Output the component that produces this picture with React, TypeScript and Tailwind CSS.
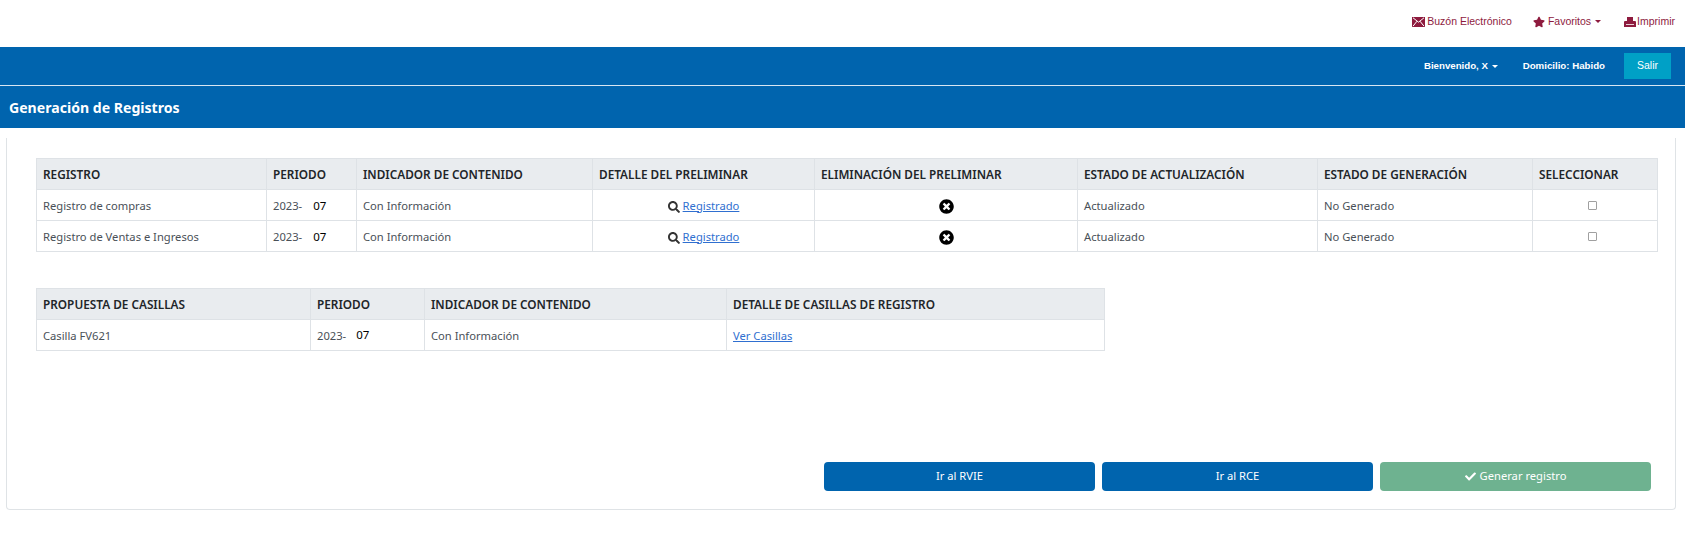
import { FaCheck, FaSearch, FaStar, FaTimesCircle } from "react-icons/fa";

const headerCell = "border border-[#dee2e6] px-1.5 pt-px text-left text-[11.8px] font-semibold text-[#212529]";
const cell = "border border-[#dee2e6] px-1.5 text-[#495057]";
const textCell = `${cell} pt-0.5`;

const registros = ["Registro de compras", "Registro de Ventas e Ingresos"];

function Caret() {
  return <span className="ml-px inline-block border-x-[3px] border-t-[3px] border-x-transparent border-t-current align-middle" />;
}

function MailIcon() {
  return (
    <svg viewBox="0 0 13 10" className="h-2.5 w-[13px]" aria-hidden>
      <path d="M0 0h13v10H0z" fill="currentColor" />
      <path d="M1 .8 6.500 5.200 12 .8M1 9.200 5 4.200M12 9.200 8 4.200" fill="none" stroke="#fff" strokeWidth="1" />
    </svg>
  );
}

function PrintIcon() {
  return (
    <svg viewBox="0 0 12 10" className="h-2.5 w-3" aria-hidden>
      <path d="M3 0h6v4H3zM1 4h10a1 1 0 0 1 1 1v5H0V5a1 1 0 0 1 1-1z" fill="currentColor" />
      <path d="M2 7.500h8" fill="none" stroke="#fff" strokeWidth="0.8" />
    </svg>
  );
}

function Periodo({ raised }: { raised?: boolean }) {
  return (
    <span>
      2023-
      <span className={raised ? "relative -top-px ml-[10px] text-[11.5px] text-black" : "ml-[11px] text-[11.5px] text-black"}>07</span>
    </span>
  );
}

export default function App() {
  return (
    <div className="h-[541px] w-[1685px] bg-white font-['Noto_Sans',sans-serif] text-[11.2px]">
      <div className="flex h-[47px] items-center justify-end gap-[21px] pb-1 pr-[10px] font-['Liberation_Sans',sans-serif] text-[10.5px] text-[#8e1b3e]">
        <a className="flex items-center gap-[2px]"><MailIcon />Buzón Electrónico</a>
        <a className="mr-[2px] flex items-center gap-[3px]"><FaStar className="size-3" />Favoritos <Caret /></a>
        <a className="flex items-center gap-[1px]"><PrintIcon />Imprimir</a>
      </div>

      <header className="bg-[#0064ae] text-white">
        <div className="flex h-[39px] items-center justify-end gap-[22px] border-b border-[#d8e6f2] pr-[14px] font-['Liberation_Sans',sans-serif] text-[9.7px] font-bold">
          <span className="mr-[3px] pt-px">Bienvenido, X <Caret /></span>
          <span>Domicilio: Habido</span>
          <button className="ml-[-3px] h-[26px] w-[47px] bg-[#00a0c6] text-[10.5px] font-normal">Salir</button>
        </div>
        <h1 className="flex h-[42px] items-center px-[9px] pt-px text-[14.1px] font-bold">Generación de Registros</h1>
      </header>

      <main className="ml-1.5 mr-[9px] mt-2.5 flex h-[372px] flex-col rounded-b border border-t-0 border-[#dfe3e6] pl-[29px] pr-[18px] pt-5">
        <table className="w-full table-fixed border-collapse">
          <colgroup>
            <col className="w-[230px]" />
            <col className="w-[90px]" />
            <col className="w-[236px]" />
            <col className="w-[222px]" />
            <col className="w-[263px]" />
            <col className="w-[240px]" />
            <col className="w-[215px]" />
            <col className="w-[125px]" />
          </colgroup>
          <thead>
            <tr className="h-[31px] bg-[#e9ecef]">
              <th className={headerCell}>REGISTRO</th>
              <th className={headerCell}>PERIODO</th>
              <th className={headerCell}>INDICADOR DE CONTENIDO</th>
              <th className={headerCell}>DETALLE DEL PRELIMINAR</th>
              <th className={headerCell}>ELIMINACIÓN DEL PRELIMINAR</th>
              <th className={headerCell}>ESTADO DE ACTUALIZACIÓN</th>
              <th className={headerCell}>ESTADO DE GENERACIÓN</th>
              <th className={headerCell}>SELECCIONAR</th>
            </tr>
          </thead>
          <tbody>
            {registros.map((registro) => (
              <tr key={registro} className="h-[31px]">
                <td className={textCell}>{registro}</td>
                <td className={`${cell} pt-px`}><Periodo /></td>
                <td className={textCell}>Con Información</td>
                <td className={`${textCell} text-center`}>
                  <FaSearch className="mr-[3px] inline size-3 text-[#333]" />
                  <a className="text-[#2f6fd0] underline">Registrado</a>
                </td>
                <td className={`${cell} pt-px text-center`}>
                  <FaTimesCircle className="inline size-[15px] text-black" />
                </td>
                <td className={textCell}>Actualizado</td>
                <td className={textCell}>No Generado</td>
                <td className={`${cell} pr-3 text-center`}>
                  <input type="checkbox" className="size-[9px] appearance-none rounded-[1px] border border-[#a0a0a0] bg-white align-middle" />
                </td>
              </tr>
            ))}
          </tbody>
        </table>

        <table className="mt-9 w-[1068px] table-fixed border-collapse">
          <colgroup>
            <col className="w-[274px]" />
            <col className="w-[114px]" />
            <col className="w-[302px]" />
            <col className="w-[378px]" />
          </colgroup>
          <thead>
            <tr className="h-[31px] bg-[#e9ecef]">
              <th className={headerCell}>PROPUESTA DE CASILLAS</th>
              <th className={headerCell}>PERIODO</th>
              <th className={headerCell}>INDICADOR DE CONTENIDO</th>
              <th className={headerCell}>DETALLE DE CASILLAS DE REGISTRO</th>
            </tr>
          </thead>
          <tbody>
            <tr className="h-[31px]">
              <td className={textCell}>Casilla FV621</td>
              <td className={`${cell} pt-px`}><Periodo raised /></td>
              <td className={textCell}>Con Información</td>
              <td className={textCell}><a className="text-[#2f6fd0] underline">Ver Casillas</a></td>
            </tr>
          </tbody>
        </table>

        <div className="mt-[111px] flex justify-end gap-[7px] pr-1.5 text-white">
          <button className="h-[29px] w-[271px] rounded bg-[#0064ae]">Ir al RVIE</button>
          <button className="h-[29px] w-[271px] rounded bg-[#0064ae]">Ir al RCE</button>
          <button className="flex h-[29px] w-[271px] items-center justify-center gap-1 rounded bg-[#6eb290]">
            <FaCheck className="size-[11px]" />Generar registro
          </button>
        </div>
      </main>
    </div>
  );
}
